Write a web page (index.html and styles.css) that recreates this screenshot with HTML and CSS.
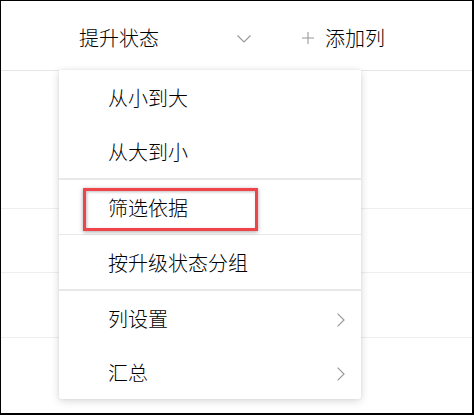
FILE: index.html
```html
<!DOCTYPE html>
<html lang="zh">
<head>
<meta charset="utf-8">
<title>列菜单</title>
<link rel="stylesheet" href="styles.css">
</head>
<body>
<div class="frame">
  <div class="header">
    <span class="col-title">提升状态</span>
    <svg class="caret" width="14" height="8" viewBox="0 0 14 8"><path d="M0.5 0.5 L7 7 L13.5 0.5" fill="none" stroke="#9a9a9a" stroke-width="1.2"/></svg>
    <svg class="plus" width="12" height="12" viewBox="0 0 12 12"><path d="M6 0 V12 M0 6 H12" fill="none" stroke="#9a9a9a" stroke-width="1.1"/></svg>
    <span class="add-col">添加列</span>
  </div>
  <div class="row row-a"></div>
  <div class="row row-b"></div>
  <div class="row row-c"></div>
  <div class="row-rest"></div>

  <div class="menu">
    <div class="item">从小到大</div>
    <div class="item">从大到小</div>
    <div class="sep thick"></div>
    <div class="item highlight-host">筛选依据<span class="highlight"></span></div>
    <div class="sep"></div>
    <div class="item">按升级状态分组</div>
    <div class="sep thick"></div>
    <div class="item has-sub">列设置
      <svg class="sub" width="8" height="14" viewBox="0 0 8 14"><path d="M0.6 0.6 L7 7 L0.6 13.4" fill="none" stroke="#9a9a9a" stroke-width="1.2"/></svg>
    </div>
    <div class="item has-sub">汇总
      <svg class="sub" width="8" height="14" viewBox="0 0 8 14"><path d="M0.6 0.6 L7 7 L0.6 13.4" fill="none" stroke="#9a9a9a" stroke-width="1.2"/></svg>
    </div>
  </div>
</div>
</body>
</html>
```
FILE: styles.css
```css
* { box-sizing: border-box; }
html, body { margin: 0; padding: 0; background: #fff; }
body {
  font-family: "Noto Sans CJK SC", "Microsoft YaHei", sans-serif;
  font-weight: 300;
  color: #000;
}
.frame {
  position: relative;
  width: 474px;
  height: 415px;
  border-top: 1px solid #000;
  border-left: 1px solid #000;
  border-right: 2px solid #000;
  border-bottom: 2px solid #000;
  display: flex;
  flex-direction: column;
  overflow: hidden;
}
.header {
  height: 70px;
  flex: none;
  border-bottom: 1px solid #e6e6e6;
  display: flex;
  align-items: center;
  padding-left: 78px;
  padding-top: 5px;
  font-size: 20px;
  line-height: 24px;
}
.col-title { width: 80px; }
.caret { margin-left: 78px; margin-top: 1px; flex: none; }
.plus { margin-left: 51px; flex: none; }
.add-col { margin-left: 11px; }
.row { flex: none; border-bottom: 1px solid #eeeeee; }
.row-a { height: 138px; }
.row-b { height: 64px; }
.row-c { height: 65px; }
.row-rest { flex: 1; }

.menu {
  position: absolute;
  left: 58px;
  top: 69px;
  width: 302px;
  background: #fff;
  border-radius: 0 0 3px 3px;
  box-shadow: 0 2px 8px rgba(0,0,0,0.16), 0 0 3px rgba(0,0,0,0.06);
  display: flex;
  flex-direction: column;
}
.item {
  position: relative;
  height: 54px;
  display: flex;
  align-items: center;
  padding-left: 49px;
  padding-top: 2px;
  font-size: 20px;
  line-height: 24px;
}
.sep { height: 1px; background: #e8e8e8; flex: none; }
.sep.thick { height: 2px; }
.has-sub { justify-content: space-between; padding-right: 16px; }
.sub { margin-top: 1px; }
.highlight {
  position: absolute;
  left: 24px;
  top: 8px;
  width: 175px;
  height: 43px;
  border: 3px solid #ef444a;
  box-shadow: 0 1px 4px rgba(0,0,0,0.35), inset 1px 1px 3px rgba(0,0,0,0.25);
  pointer-events: none;
}
```
